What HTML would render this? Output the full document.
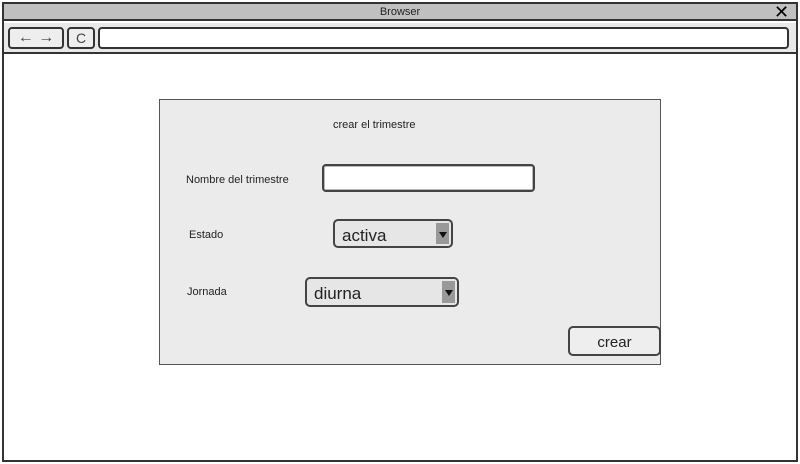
<!DOCTYPE html><html><head><style>
body{margin:0;width:800px;height:464px;position:relative;font-family:"Comic Sans MS","Liberation Sans",sans-serif;background:#fff;overflow:hidden}
.a{position:absolute;box-sizing:border-box}
.f{border:2px solid #333;border-radius:4px}
.sel{border:2px solid #444;border-radius:5px;background:#e6e6e6;font-size:17px;color:#222;padding-left:7px;line-height:29px}
.arr{position:absolute;right:2px;top:2px;bottom:2px;width:13px;background:#999}
.arr:after{content:"";position:absolute;left:3px;top:9px;border-left:4px solid transparent;border-right:4px solid transparent;border-top:6px solid #111}
.t{font-size:11px;color:#222}
</style></head><body>
<div class="a" style="left:2px;top:2px;width:796px;height:460px;border:2px solid #333"></div>
<div class="a" style="left:4px;top:4px;width:792px;height:17px;background:#c0c0c0;border-bottom:2px solid #333;text-align:center;font-size:11px;line-height:17px;color:#222">Browser</div>
<div class="a" style="left:774px;top:2px;font-size:18px;line-height:20px">✕</div>
<div class="a" style="left:4px;top:23px;width:792px;height:31px;background:#e8e8e8;border-bottom:2px solid #333"></div>
<div class="a f" style="left:8px;top:27px;width:56px;height:22px;background:#eee;font-size:16px;line-height:17px;text-align:center;color:#444">← →</div>
<div class="a f" style="left:67px;top:27px;width:28px;height:22px;background:#eee;font-size:14px;line-height:18px;text-align:center;color:#444">C</div>
<div class="a f" style="left:98px;top:27px;width:691px;height:22px;background:#fff"></div>
<div class="a" style="left:159px;top:99px;width:502px;height:266px;background:#ebebeb;border:1px solid #555"></div>
<div class="a t" style="left:333px;top:119px">crear el trimestre</div>
<div class="a t" style="left:186px;top:174px">Nombre del trimestre</div>
<div class="a t" style="left:189px;top:229px">Estado</div>
<div class="a t" style="left:187px;top:286px">Jornada</div>
<div class="a" style="left:322px;top:164px;width:213px;height:28px;border:2px solid #444;border-radius:4px;background:#fff;box-shadow:inset 0 0 0 1px #bbb"></div>
<div class="a sel" style="left:333px;top:219px;width:120px;height:29px">activa<div class="arr"></div></div>
<div class="a sel" style="left:305px;top:277px;width:154px;height:30px">diurna<div class="arr"></div></div>
<div class="a" style="left:568px;top:326px;width:93px;height:30px;border:2px solid #444;border-radius:5px;background:#eee;font-size:15px;text-align:center;line-height:30px;color:#222">crear</div>
</body></html>
